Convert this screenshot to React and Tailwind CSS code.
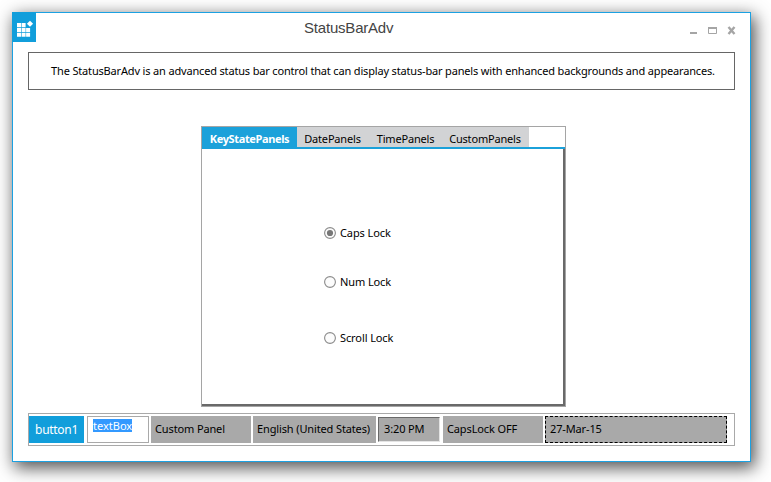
import React from "react";

function Tab({ className, children }) {
  return (
    <div className={"flex h-5 items-center justify-center pt-[4px] whitespace-nowrap " + className}>{children}</div>
  );
}

function Radio({ label, checked, className }) {
  return (
    <label className={"flex h-4 items-center gap-1 " + className}>
      <svg width="12" height="12" viewBox="0 0 12 12">
        <circle cx="6" cy="6" r="5.4" fill="#fcfcfc" stroke="#8b8b8b" strokeWidth="1.1" />
        {checked && <circle cx="6" cy="6" r="3.1" fill="#777" />}
      </svg>
      <span className="tracking-[-0.1px] whitespace-nowrap">{label}</span>
    </label>
  );
}

function Panel({ className, children }) {
  return (
    <div className={"flex shrink-0 items-center bg-[#a9a9a9] pb-[2px] tracking-[-0.13px] whitespace-nowrap " + className}>{children}</div>
  );
}

export default function App() {
  return (
    <div className="h-[482px] w-[771px] overflow-hidden bg-white pt-3 pl-3 font-['Noto_Sans','Open_Sans',sans-serif] text-[11px] leading-4 text-black">
      <div className="flex h-[450px] w-[739px] flex-col border border-[#1ba1e2] bg-white shadow-[3px_5px_16px_1px_rgba(0,0,0,0.68)]">
        <header className="flex h-[39px] justify-between">
          <div className="-mt-px -ml-px h-[30px] w-[45px]">
            <svg width="24" height="30" viewBox="0 0 24 30">
              <path d="M0 0h24v30H0z" fill="#119edb" />
              <g fill="#fff">
                <path d="M5 11h4v4.300H5zM9.600 11h4v4.300h-4zM5 15.900h4v4.200H5zM9.600 15.900h4v4.200h-4zM14.100 15.900h4v4.200h-4zM5 20.700h4v4H5zM9.600 20.700h4v4h-4zM14.100 20.700h4v4h-4z" />
                <path d="M18 8.700 21.100 11.700 18 14.700 14.900 11.700z" />
              </g>
            </svg>
          </div>
          <h1 className="mr-[46px] ml-auto w-[340px] pt-[6px] font-['Liberation_Sans',sans-serif] text-[15px] leading-[18px] tracking-[-0.2px] text-[#444]">StatusBarAdv</h1>
          <svg className="mt-[13px] mr-[14px]" width="46" height="10" viewBox="0 0 46 10" fill="none" stroke="#a5a5a5">
            <path d="M0 7h7" strokeWidth="2" />
            <path d="M18.500 1.500h8v6h-8zM18 2h9" />
            <path d="M18 2h9" strokeWidth="2" />
            <path d="m38.500 1 6 7M44.500 1l-6 7" strokeWidth="2.400" />
          </svg>
        </header>
        <div className="ml-[15px] flex h-[38px] w-[707px] items-center justify-center border border-[#666] pl-[3px] tracking-[-0.165px] whitespace-nowrap">
          The StatusBarAdv is an advanced status bar control that can display status-bar panels with enhanced backgrounds and appearances.
        </div>
        <section className="mt-9 ml-[188px] h-[281px] w-[365px] border border-[#a5a5a5]">
          <div className="flex h-[22px] border-b-2 border-[#1ba1da]">
            <Tab className="w-[95px] bg-[#1ba1da] font-bold tracking-[-0.37px] text-white">KeyStatePanels</Tab>
            <div className="flex bg-[#d2d3d5] tracking-[-0.18px]">
              <Tab className="w-[71px]">DatePanels</Tab>
              <Tab className="w-[73px] pl-[2px]">TimePanels</Tab>
              <Tab className="w-[88px]">CustomPanels</Tab>
            </div>
          </div>
          <div className="h-[257px] border-r-2 border-b-2 border-[#696969] pt-[76px] pl-[122px]">
            <Radio label="Caps Lock" checked />
            <Radio label="Num Lock" className="mt-[33px]" />
            <Radio label="Scroll Lock" className="mt-[40px]" />
          </div>
        </section>
        <footer className="mt-[6px] ml-[15px] flex h-[33px] w-[707px] border border-[#a9a9a9] pt-[2px]">
          <button className="h-[27px] w-[55px] bg-[#119edb] pt-[1px] text-xs tracking-[-0.3px] text-white">button1</button>
          <div className="ml-[3px] h-[27px] w-[62px] border border-[#a9a9a9] pt-[2px] pl-[5px]">
            <span className="block h-[13px] w-[39px] bg-[#3399ff] leading-[13px] text-white">textBox</span>
          </div>
          <Panel className="ml-[2px] h-[27px] w-[100px] pl-1">Custom Panel</Panel>
          <Panel className="ml-[2px] h-[27px] w-[123px] pl-1">English (United States)</Panel>
          <Panel className="mt-px ml-[2px] h-[25px] w-[62px] border border-t-[#696969] border-r-[#e3e3e3] border-b-[#e3e3e3] border-l-[#696969] pl-[5px]">3:20 PM</Panel>
          <Panel className="ml-[3px] h-[27px] w-[100px] pl-1">CapsLock OFF</Panel>
          <Panel className="ml-[2px] h-[27px] w-[182px] border border-dashed border-black pl-1">27-Mar-15</Panel>
        </footer>
      </div>
    </div>
  );
}
